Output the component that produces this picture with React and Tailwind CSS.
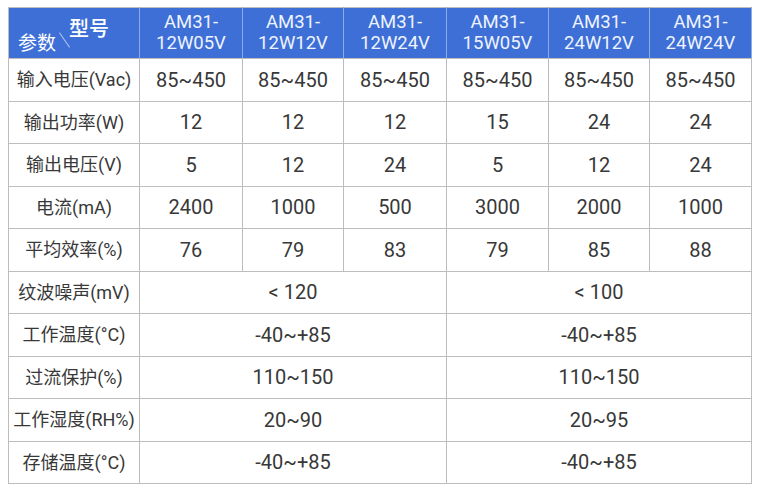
import React from 'react';

const models = ['12W05V', '12W12V', '12W24V', '15W05V', '24W12V', '24W24V'];

const rows = [
    { label: '输入电压(Vac)', values: ['85~450', '85~450', '85~450', '85~450', '85~450', '85~450'] },
    { label: '输出功率(W)', values: ['12', '12', '12', '15', '24', '24'] },
    { label: '输出电压(V)', values: ['5', '12', '24', '5', '12', '24'] },
    { label: '电流(mA)', values: ['2400', '1000', '500', '3000', '2000', '1000'] },
    { label: '平均效率(%)', values: ['76', '79', '83', '79', '85', '88'] },
];

const merged = [
    { label: '纹波噪声(mV)', values: ['< 120', '< 100'] },
    { label: '工作温度(°C)', values: ['-40~+85', '-40~+85'] },
    { label: '过流保护(%)', values: ['110~150', '110~150'] },
    { label: '工作湿度(RH%)', values: ['20~90', '20~95'] },
    { label: '存储温度(°C)', values: ['-40~+85', '-40~+85'] },
];

const font = { fontFamily: '"Roboto", "Noto Sans CJK SC", sans-serif' };

export default function App() {
    const cell = 'border border-[#bdbdbd] text-center text-[#383838] h-[42.5px] p-0';
    return (
        <div className="w-[759px] h-[491px] bg-white pt-[7px] pl-[8px]" style={font}>
            <table className="border-collapse table-fixed w-[743px]">
                <colgroup>
                    <col className="w-[131px]" />
                    <col className="w-[103px]" />
                    <col className="w-[101px]" />
                    <col className="w-[103px]" />
                    <col className="w-[102px]" />
                    <col className="w-[101px]" />
                    <col className="w-[102px]" />
                </colgroup>
                <thead>
                    <tr className="bg-[#3d6fd6] h-[50px]">
                        <th className="border border-[#bdbdbd] border-r-[#8eaae6] p-0 font-normal text-white">
                            <div className="relative h-[50px]">
                                <span className="absolute left-[9px] bottom-[5px] text-[19px] leading-none">参数</span>
                                <span className="absolute left-[55px] top-[23px] h-[18px] w-px bg-[#a9bfee] -rotate-[35deg]" />
                                <span className="absolute left-[60px] top-[11px] text-[20px] leading-none font-medium">型号</span>
                            </div>
                        </th>
                        {models.map((m) => (
                            <th
                                key={m}
                                className="border border-[#bdbdbd] border-l-[#8eaae6] border-r-[#8eaae6] p-0 font-normal text-[18.5px] leading-[21px] text-[#eef3ff]"
                            >
                                AM31-
                                <br />
                                {m}
                            </th>
                        ))}
                    </tr>
                </thead>
                <tbody>
                    {rows.map((r) => (
                        <tr key={r.label}>
                            <td className={`${cell} text-[18px]`}>{r.label}</td>
                            {r.values.map((v, i) => (
                                <td key={i} className={`${cell} text-[20px]`}>
                                    {v}
                                </td>
                            ))}
                        </tr>
                    ))}
                    {merged.map((r) => (
                        <tr key={r.label}>
                            <td className={`${cell} text-[18px]`}>{r.label}</td>
                            {r.values.map((v, i) => (
                                <td key={i} colSpan={3} className={`${cell} text-[20px]`}>
                                    {v}
                                </td>
                            ))}
                        </tr>
                    ))}
                </tbody>
            </table>
        </div>
    );
}
